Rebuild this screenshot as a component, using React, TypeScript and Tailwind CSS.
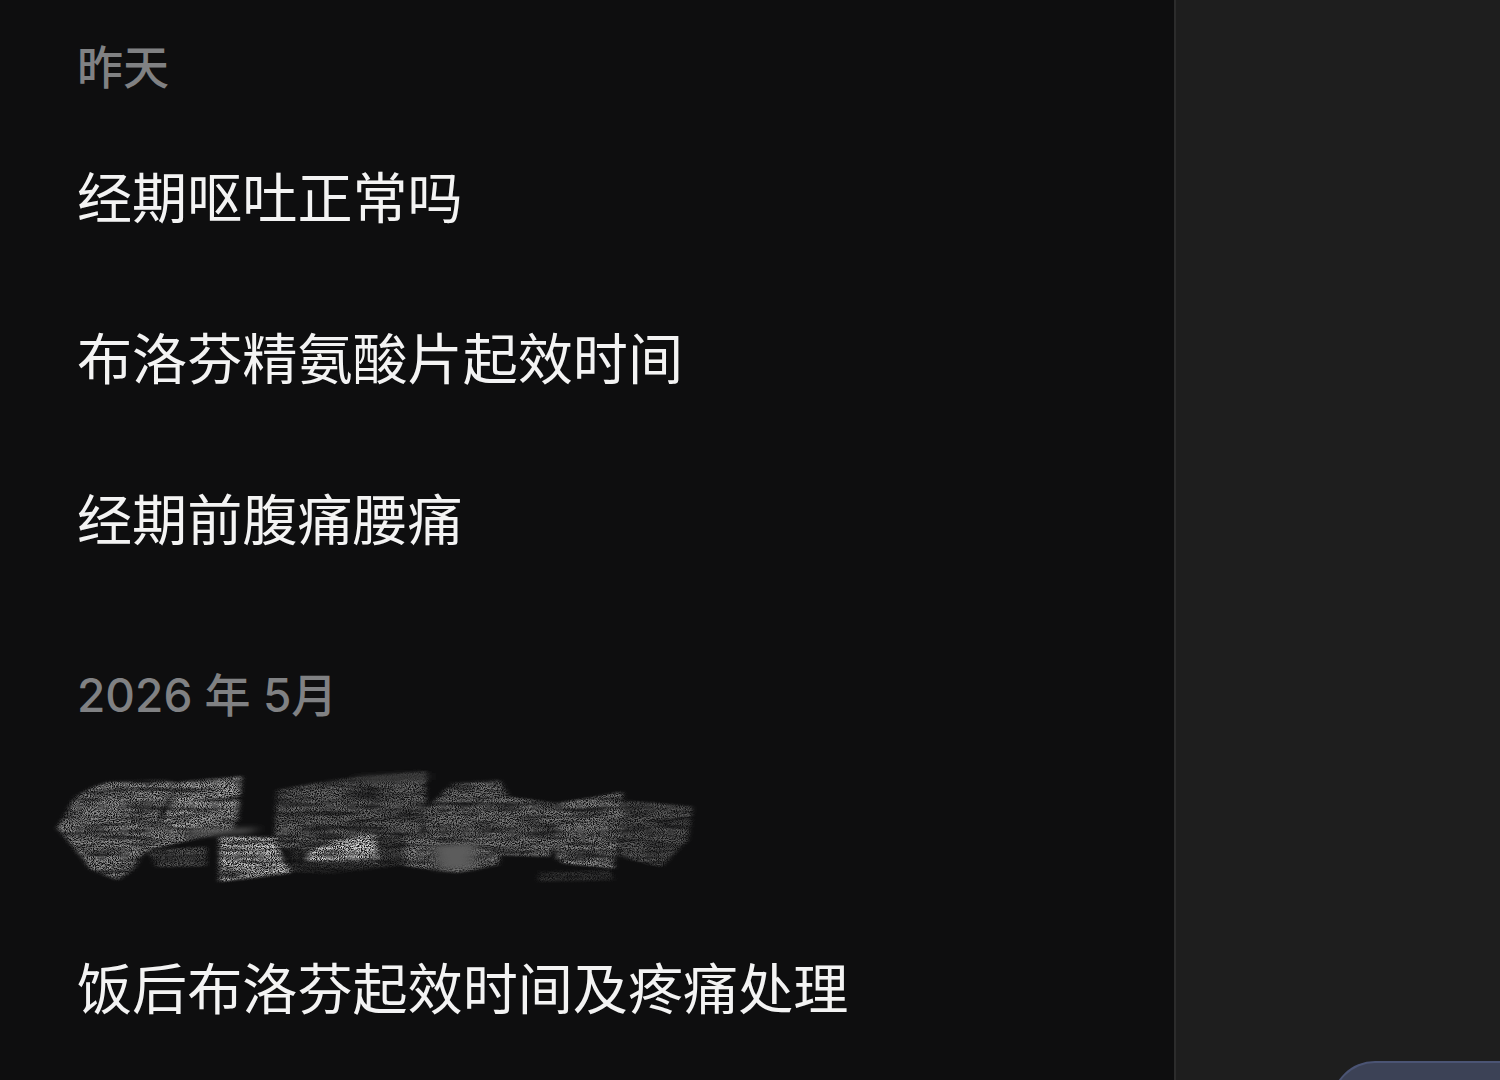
const patches: [string, string][] = [
  ["35,265 70,170 105,140 130,125 240,120 270,130 230,220 230,300 200,340 180,390 150,420 100,390 60,310", "#909090"],
  ["270,125 388,108 380,240 370,270 290,300 205,330 235,240", "#a6a6a6"],
  ["205,330 320,320 320,378 225,382", "#565656"],
  ["345,290 450,290 480,400 345,425", "#cccccc"],
  ["455,150 560,120 740,95 740,200 730,285 620,290 520,350 450,315", "#6c6c6c"],
  ["505,350 560,300 640,285 650,368 510,362", "#dcdcdc"],
  ["480,320 520,330 510,365 640,370 700,375 560,400 480,395", "#343434"],
  ["640,290 730,285 700,375 650,368", "#484848"],
  ["700,280 890,278 990,300 975,350 880,345 880,375 800,398 700,378", "#808080"],
  ["790,130 880,120 900,170 990,190 990,300 880,280 740,280 735,215", "#787878"],
  ["990,190 1115,155 1120,240 1100,370 990,360 985,300", "#848484"],
  ["1120,180 1250,200 1240,300 1190,380 1110,350", "#5c5c5c"],
  ["955,395 1090,390 1100,420 955,425", "#383838"],
  ["1000,360 1100,372 1100,385 1000,370", "#a8a8a8"],
];

function Scribble() {
  return (
    <svg viewBox="0 0 1568 510" preserveAspectRatio="none" className="block w-[820px] h-[170px] -ml-[38px] -mb-[1px]">
      <defs>
        <filter id="chalk" x="-5%" y="-5%" width="110%" height="110%">
          <feGaussianBlur in="SourceGraphic" stdDeviation="5 3" result="b" />
          <feTurbulence type="fractalNoise" baseFrequency="0.5 0.32" numOctaves="2" seed="7" result="n" />
          <feColorMatrix in="n" type="matrix" values="0 0 0 0 0  0 0 0 0 0  0 0 0 0 0  2.2 2.2 0 0 -1.6" result="a" />
          <feComposite in="b" in2="a" operator="in" result="c" />
          <feTurbulence type="fractalNoise" baseFrequency="0.012 0.07" numOctaves="2" seed="3" result="s" />
          <feColorMatrix in="s" type="matrix" values="0 0 0 0 0  0 0 0 0 0  0 0 0 0 0  1.8 0 0 0 -0.1" result="sa" />
          <feComposite in="c" in2="sa" operator="in" result="d" />
          <feGaussianBlur in="d" stdDeviation="1.1 0.6" />
        </filter>
        <filter id="soft" x="-40%" y="-40%" width="180%" height="180%">
          <feGaussianBlur stdDeviation="12 8" />
        </filter>
      </defs>
      <g filter="url(#chalk)">
        {patches.map(([p, c]) => (
          <polygon key={p} points={p} fill={c} />
        ))}
      </g>
      <polygon points="750,315 840,310 830,385 765,390" fill="#5c5c5c" filter="url(#soft)" />
      <polygon points="290,272 420,262 400,280 280,290" fill="#505050" filter="url(#soft)" />
      <polygon points="600,110 740,98 740,120 620,125" fill="#343434" filter="url(#soft)" />
    </svg>
  );
}

function Label({ children, className = "" }: { children: React.ReactNode; className?: string }) {
  return <div className={`h-[80px] flex items-center text-[46px] font-medium text-[#808183] leading-none ${className}`}>{children}</div>;
}

function Item({ children }: { children: React.ReactNode }) {
  return <div className="h-[161px] flex items-center text-[55.1px] text-[#f3f3f3] leading-none whitespace-nowrap">{children}</div>;
}

export default function App() {
  return (
    <div className="flex h-[1080px] w-[1500px] overflow-hidden bg-[#0e0e0f] font-['Inter','Noto_Sans_CJK_SC',sans-serif]">
      <div className="w-[1174px] shrink-0 pl-[77px] pt-[27px]">
        <Label className="mb-[11px]">昨天</Label>
        <Item>经期呕吐正常吗</Item>
        <Item>布洛芬精氨酸片起效时间</Item>
        <Item>经期前腹痛腰痛</Item>
        <Label className="mt-[54px] mb-[5px]">2026 年 5月</Label>
        <Scribble />
        <Item>饭后布洛芬起效时间及疼痛处理</Item>
      </div>
      <div className="flex-1 flex flex-col justify-end bg-[#1e1e1e] border-l-2 border-[#2c2c2c] overflow-hidden">
        <div className="ml-[155px] h-[60px] shrink-0 -mb-[41px] rounded-tl-[44px] bg-[#3c4256] border-t-2 border-l-2 border-[#4b5474]" />
      </div>
    </div>
  );
}
